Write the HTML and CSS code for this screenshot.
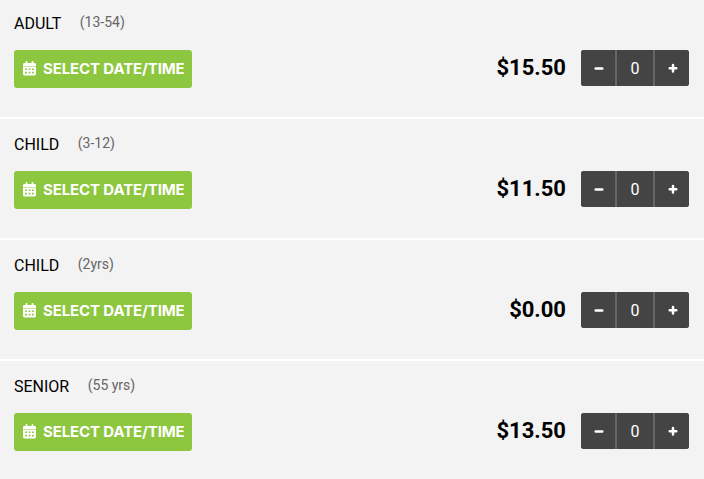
FILE: index.html
```
<!DOCTYPE html>
<html lang="en">
<head>
  <meta charset="UTF-8">
  <title>Select Tickets</title>
  <link rel="stylesheet" href="styles.css">
</head>
<body>

  <!-- Icons shared by the rows -->
  <svg class="sprite" width="0" height="0">
    <symbol id="calendar" viewBox="0 0 13 15">
      <path fill="currentColor" fill-rule="evenodd" d="M1.4 2H2.6V.8Q2.6 0 3.5 0T4.4.8V2H8.6V.8Q8.6 0 9.5 0T10.4.8V2H11.6Q13 2 13 3.4V5H0V3.4Q0 2 1.4 2ZM0 5.6H13V13Q13 14.4 11.6 14.4H1.4Q0 14.4 0 13ZM2.2 7.4V9H4V7.4ZM5.6 7.4V9H7.4V7.4ZM9 7.4V9H10.8V7.4ZM2.2 10.8V12.4H4V10.8ZM5.6 10.8V12.4H7.4V10.8ZM9 10.8V12.4H10.8V10.8Z"/>
    </symbol>
    <symbol id="minus" viewBox="0 0 10 10">
      <path stroke="currentColor" stroke-width="2.4" stroke-linecap="round" d="M1.7 5.5H8.3"/>
    </symbol>
    <symbol id="plus" viewBox="0 0 10 10">
      <path stroke="currentColor" stroke-width="2.5" stroke-linecap="round" d="M1.7 5.2H8.3M5 1.9V8.5"/>
    </symbol>
  </svg>

  <div class="tickets">
    <div class="ticket">
      <div class="title"><span class="name">ADULT</span><span class="age">(13-54)</span></div>
      <div class="controls">
        <button class="date-btn"><svg class="icon"><use href="#calendar"/></svg><span>SELECT DATE/TIME</span></button>
        <span class="price">$15.50</span>
        <div class="stepper">
          <button aria-label="Remove"><svg class="sign"><use href="#minus"/></svg></button>
          <span class="count">0</span>
          <button aria-label="Add"><svg class="sign"><use href="#plus"/></svg></button>
        </div>
      </div>
    </div>

    <div class="ticket">
      <div class="title"><span class="name">CHILD</span><span class="age">(3-12)</span></div>
      <div class="controls">
        <button class="date-btn"><svg class="icon"><use href="#calendar"/></svg><span>SELECT DATE/TIME</span></button>
        <span class="price">$11.50</span>
        <div class="stepper">
          <button aria-label="Remove"><svg class="sign"><use href="#minus"/></svg></button>
          <span class="count">0</span>
          <button aria-label="Add"><svg class="sign"><use href="#plus"/></svg></button>
        </div>
      </div>
    </div>

    <div class="ticket">
      <div class="title"><span class="name">CHILD</span><span class="age">(2yrs)</span></div>
      <div class="controls">
        <button class="date-btn"><svg class="icon"><use href="#calendar"/></svg><span>SELECT DATE/TIME</span></button>
        <span class="price">$0.00</span>
        <div class="stepper">
          <button aria-label="Remove"><svg class="sign"><use href="#minus"/></svg></button>
          <span class="count">0</span>
          <button aria-label="Add"><svg class="sign"><use href="#plus"/></svg></button>
        </div>
      </div>
    </div>

    <div class="ticket">
      <div class="title"><span class="name">SENIOR</span><span class="age">(55 yrs)</span></div>
      <div class="controls">
        <button class="date-btn"><svg class="icon"><use href="#calendar"/></svg><span>SELECT DATE/TIME</span></button>
        <span class="price">$13.50</span>
        <div class="stepper">
          <button aria-label="Remove"><svg class="sign"><use href="#minus"/></svg></button>
          <span class="count">0</span>
          <button aria-label="Add"><svg class="sign"><use href="#plus"/></svg></button>
        </div>
      </div>
    </div>
  </div>

</body>
</html>
```
FILE: styles.css
```
body {
  margin: 0;
  font-family: Roboto, Arial, sans-serif;
  background-color: #f3f3f3;
  overflow: hidden;
}

.sprite {
  display: block;
}

.ticket {
  box-sizing: border-box;
  height: 121px;
  padding: 14px 15px 0 14px;
  border-bottom: 2px solid #fff;
}

.ticket:first-child {
  height: 119px;
  padding-top: 12px;
}

.ticket:last-child {
  height: 118px;
  border-bottom: none;
}

.title {
  display: flex;
  height: 38px;
}

.name {
  font-size: 16px;
  line-height: 23px;
  color: #000;
}

.age {
  margin-left: 18.5px;
  font-size: 14px;
  line-height: 20px;
  color: #666;
}

.controls {
  display: flex;
  align-items: flex-start;
}

button {
  border: none;
  padding: 0;
  cursor: pointer;
}

.date-btn {
  display: flex;
  align-items: center;
  width: 178px;
  height: 38px;
  padding: 0 0 2px 9px;
  border-radius: 3px;
  background-color: #8dc63f;
  color: #fff;
  font-family: Inter, sans-serif;
  font-size: 15px;
  font-weight: 700;
  letter-spacing: -0.12px;
  white-space: nowrap;
}

.icon {
  width: 13px;
  height: 15px;
  margin-right: 7px;
}

.price {
  margin-left: auto;
  margin-right: 15px;
  font-size: 22px;
  font-weight: bold;
  line-height: 36px;
  color: #000;
}

.stepper {
  display: flex;
  width: 108px;
  height: 36px;
  border-radius: 3px;
  overflow: hidden;
  background-color: #444;
}

.stepper button {
  display: flex;
  align-items: center;
  justify-content: center;
  width: 34px;
  padding-left: 2px;
  background-color: #444;
  color: #fff;
}

.sign {
  width: 10px;
  height: 10px;
}

.count {
  width: 36px;
  border-left: 2px solid #666;
  border-right: 2px solid #666;
  color: #fff;
  font-size: 16px;
  line-height: 37px;
  text-align: center;
}
```
